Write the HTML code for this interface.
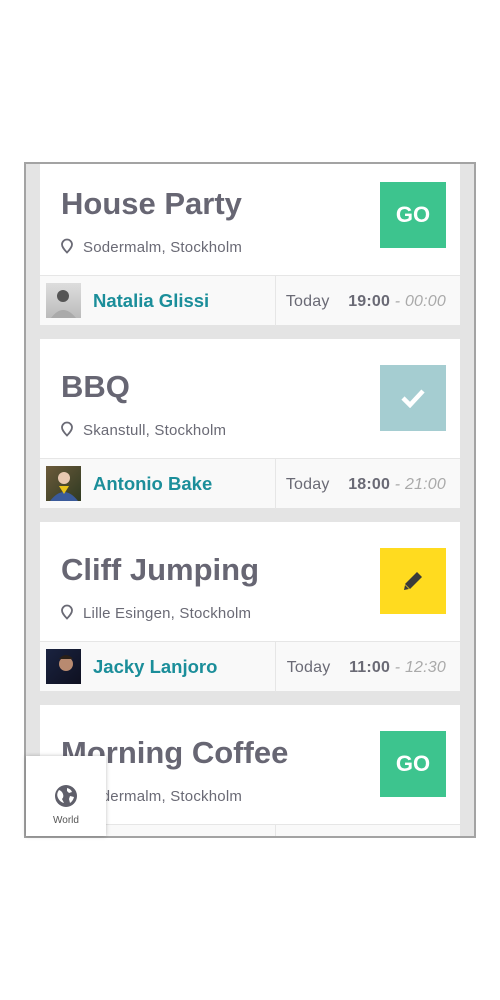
<!DOCTYPE html><html><head><style>
*{margin:0;padding:0;box-sizing:border-box}
body{width:500px;height:1000px;background:#fff;font-family:"Liberation Sans",sans-serif;position:relative;overflow:hidden}
.frame{position:absolute;left:24px;top:162px;width:452px;height:676px;border:2px solid #a3a3a3;background:#e4e4e4;overflow:hidden}
.card{position:absolute;left:14px;width:420px;height:169px;background:#fff}
.t{position:absolute;left:21px;top:28px;font-size:31px;color:#676673;font-weight:bold;letter-spacing:0;line-height:40px}
.loc{position:absolute;left:20px;top:82px;font-size:15px;color:#6a6a75;line-height:18px;letter-spacing:.2px}
.loc svg{vertical-align:-2px;margin-right:9px}
.btn{position:absolute;left:340px;top:26px;width:66px;height:66px;display:flex;align-items:center;justify-content:center;color:#fff;font-weight:bold;font-size:22px}
.row{position:absolute;left:0;top:119px;width:420px;height:50px;background:#f9f9f9;border-top:1px solid #e6e6e6}
.av{position:absolute;left:6px;top:7px;width:35px;height:35px}
.nm{position:absolute;left:53px;top:14px;font-size:18.5px;font-weight:bold;color:#1b8e9a}
.div{position:absolute;left:235px;top:0;width:1px;height:50px;background:#e6e6e6}
.tm{position:absolute;right:14px;top:17px;font-size:16px;color:#6a6a75;letter-spacing:.2px}
.tm b{margin-left:14px;color:#6a6a75}
.tm i{color:#aaa}
.world{position:absolute;left:26px;top:756px;width:80px;height:80px;background:#fff;box-shadow:0 0 4px rgba(0,0,0,.25);text-align:center}
.world div{font-size:10px;color:#555;margin-top:2px}
</style></head><body>
<div class="frame">
<div class="card" style="top:-8px">
<div class="t">House Party</div>
<div class="loc"><svg width="14" height="16" viewBox="0 0 14 16"><path d="M7 1.5a5 5 0 0 0-5 5c0 3 5 8 5 8s5-5 5-8a5 5 0 0 0-5-5z" fill="none" stroke="#6a6a75" stroke-width="1.8"/></svg>Sodermalm, Stockholm</div>
<div class="btn" style="background:#3dc48e">GO</div>
<div class="row"><div class="av" style="background:linear-gradient(#ddd,#bbb)"><svg width="35" height="35"><circle cx="17" cy="13" r="6" fill="#555"/><path d="M5 35q12-16 25 0z" fill="#aaa"/></svg></div><div class="nm">Natalia Glissi</div><div class="div"></div><div class="tm">Today <b>19:00</b> <i>- 00:00</i></div></div>
</div>
<div class="card" style="top:175px">
<div class="t">BBQ</div>
<div class="loc"><svg width="14" height="16" viewBox="0 0 14 16"><path d="M7 1.5a5 5 0 0 0-5 5c0 3 5 8 5 8s5-5 5-8a5 5 0 0 0-5-5z" fill="none" stroke="#6a6a75" stroke-width="1.8"/></svg>Skanstull, Stockholm</div>
<div class="btn" style="background:#a5cdd1"><svg width="24" height="20" viewBox="0 0 24 20"><path d="M2 10l7 7L22 3" fill="none" stroke="#fff" stroke-width="4.5"/></svg></div>
<div class="row"><div class="av" style="background:linear-gradient(135deg,#6b5a3a,#2f3a22)"><svg width="35" height="35"><circle cx="18" cy="12" r="6" fill="#e8c8b0"/><path d="M4 35q14-18 28 0z" fill="#3a5a9a"/><path d="M13 20l5 8 5-8" fill="#e8c21a"/></svg></div><div class="nm">Antonio Bake</div><div class="div"></div><div class="tm">Today <b>18:00</b> <i>- 21:00</i></div></div>
</div>
<div class="card" style="top:358px">
<div class="t">Cliff Jumping</div>
<div class="loc"><svg width="14" height="16" viewBox="0 0 14 16"><path d="M7 1.5a5 5 0 0 0-5 5c0 3 5 8 5 8s5-5 5-8a5 5 0 0 0-5-5z" fill="none" stroke="#6a6a75" stroke-width="1.8"/></svg>Lille Esingen, Stockholm</div>
<div class="btn" style="background:#ffdb1f"><svg width="24" height="24" viewBox="0 0 24 24"><path d="M16 3l5 5L9 20l-5-5z" fill="#3a3a3a"/><path d="M4 16l4 4-5 1z" fill="#3a3a3a"/></svg></div>
<div class="row"><div class="av" style="background:linear-gradient(135deg,#1a2340,#0e1020)"><svg width="35" height="35"><circle cx="20" cy="15" r="7" fill="#b88a70"/><path d="M13 10q7-8 14 0" fill="#2a2018"/></svg></div><div class="nm">Jacky Lanjoro</div><div class="div"></div><div class="tm">Today <b>11:00</b> <i>- 12:30</i></div></div>
</div>
<div class="card" style="top:541px">
<div class="t">Morning Coffee</div>
<div class="loc"><svg width="14" height="16" viewBox="0 0 14 16"><path d="M7 1.5a5 5 0 0 0-5 5c0 3 5 8 5 8s5-5 5-8a5 5 0 0 0-5-5z" fill="none" stroke="#6a6a75" stroke-width="1.8"/></svg>Sodermalm, Stockholm</div>
<div class="btn" style="background:#3dc48e">GO</div>
<div class="row"><div class="div"></div></div>
</div>
</div>
<div class="world"><svg style="margin-top:28px" width="24" height="24" viewBox="0 0 24 24"><circle cx="12" cy="12" r="11" fill="#5f5f6a"/><path d="M5 6q3 1 4 4t-1 5l2 4q-4-1-6-5t1-8zM13 4q4 1 5 4l-3 1-2-2zM16 12l4 1q-1 4-4 6l-1-4z" fill="#fff"/></svg><div>World</div></div>
</body></html>
